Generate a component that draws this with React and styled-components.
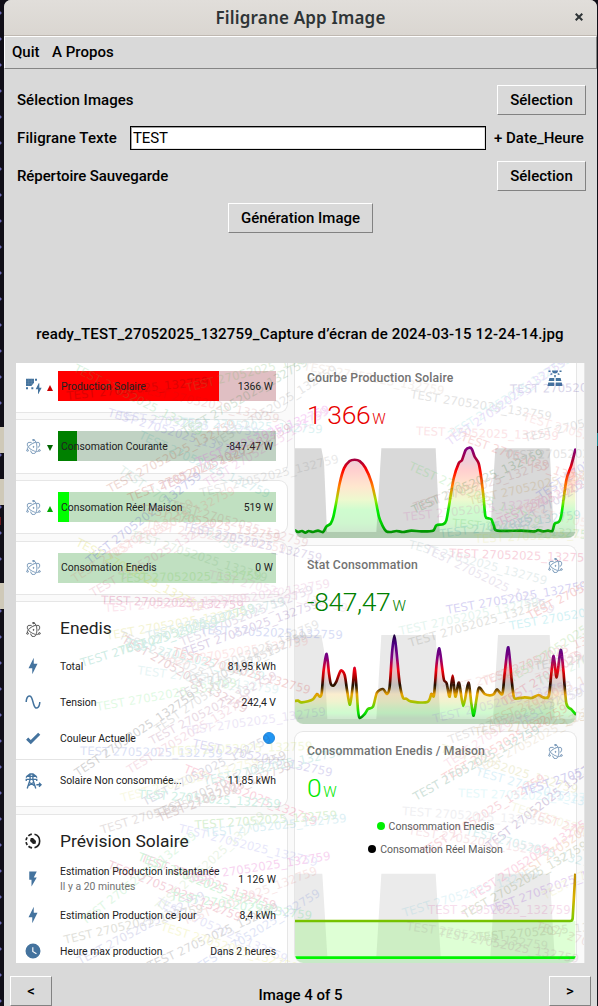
import React from "react";
import styled, { createGlobalStyle } from "styled-components";
import { SiElectron } from "react-icons/si";

const Global = createGlobalStyle`
  * { box-sizing: border-box; }
  html, body { margin: 0; padding: 0; }
  body { width: 598px; height: 1006px; overflow: hidden; background: #100e17; font-family: Roboto, "Liberation Sans", sans-serif; }
`;

const Desktop = styled.div`
  width: 598px;
  height: 1006px;
  padding: 0 1px 0 4px;
  background:
    linear-gradient(#cfc9b8, #cfc9b8) 0 427px / 4px 26px no-repeat,
    linear-gradient(#cfc9b8, #cfc9b8) 0 479px / 4px 26px no-repeat,
    linear-gradient(#cfc9b8, #cfc9b8) 0 583px / 4px 26px no-repeat,
    linear-gradient(#6d1a20, #6d1a20) 0 517px / 1px 8px no-repeat,
    linear-gradient(#127a86, #127a86) 597px 433px / 1px 13px no-repeat,
    radial-gradient(circle at 0 50%, #6a67b0 0 1px, transparent 2px) 0 0 / 4px 26px repeat-y,
    #100e17;
`;

const AppWindow = styled.div`
  display: flex;
  flex-direction: column;
  height: 1006px;
  background: #d9d9d9;
  border-radius: 7px 7px 0 0;
  overflow: hidden;
  color: #000;
  font-size: 15px;
  font-weight: 500;
`;

const TitleBar = styled.header`
  display: grid;
  grid-template-columns: 40px 1fr 40px;
  align-items: center;
  height: 36px;
  flex: none;
  background: linear-gradient(#e1deda, #dad6d1);
  border-bottom: 1px solid #bfb8b1;
  color: #2e3436;
`;

const Title = styled.h1`
  grid-column: 2;
  margin: 0;
  text-align: center;
  font: 600 17px/36px "Noto Sans", sans-serif;
  letter-spacing: 0.18px;
`;

const CloseButton = styled.button`
  border: 0;
  background: none;
  padding: 0 0 2px 3px;
  display: grid;
  place-items: center;
  svg { width: 8px; height: 8px; }
`;

const MenuBar = styled.nav`
  display: flex;
  align-items: center;
  gap: 12.6px;
  height: 33px;
  flex: none;
  padding: 0 7px 2px;
  border: 1px solid;
  border-color: #fff #858585 #858585 #fff;
`;

const Form = styled.section`
  display: flex;
  flex-direction: column;
  flex: none;
  height: 250px;
  padding: 12px 11px 0 13px;
`;

const FormRow = styled.div`
  display: flex;
  align-items: center;
  justify-content: ${(p) => p.$justify || "space-between"};
  height: ${(p) => p.$h || 38}px;
  padding-right: ${(p) => (p.$justify === "center" ? 2 : 0)}px;
`;

const FieldLabel = styled.span`
  letter-spacing: ${(p) => p.$track || 0}px;
`;

const TkButton = styled.button`
  width: ${(p) => p.$w}px;
  height: 30px;
  padding: 0;
  border: 1px solid;
  border-color: #fff #828282 #828282 #fff;
  background: #d9d9d9;
  color: #000;
  font: inherit;
  line-height: 28px;
`;

const Entry = styled.input`
  width: 356px;
  height: 24px;
  margin: 0 8px 0 13px;
  padding: 0 2px;
  border: 1px solid #000;
  border-radius: 0;
  box-shadow: inset 1px 1px #a0a0a0, inset -1px -1px #e4e4e4;
  background: #fff;
  color: #000;
  font: 400 15px/20px Roboto, sans-serif;
  letter-spacing: -0.1px;
  outline: none;
`;

const Suffix = styled.span`
  flex: 1;
  white-space: nowrap;
`;

const FileName = styled.div`
  flex: none;
  height: 44px;
  line-height: 30px;
  padding-right: 1px;
  text-align: center;
  white-space: nowrap;
  letter-spacing: 0.16px;
`;

const Photo = styled.main`
  position: relative;
  flex: none;
  display: grid;
  grid-template-columns: 272px 283px 8px;
  column-gap: 6px;
  width: 569px;
  height: 600px;
  margin-left: 12px;
  overflow: hidden;
  background: #fafafa;
  border-right: 1px solid #e4e4e4;
  color: #212121;
  font-size: 10.4px;
  font-weight: 400;
`;

const Column = styled.div`
  display: flex;
  flex-direction: column;
  gap: ${(p) => p.$gap}px;
`;

const Card = styled.section`
  flex: none;
  height: ${(p) => p.$h}px;
  background: #fff;
  border: 1px solid #e6e6e6;
  border-left-width: ${(p) => (p.$cut ? 0 : 1)}px;
  border-top-width: ${(p) => (p.$first ? 0 : 1)}px;
  border-radius: ${(p) => (p.$cut ? `0 ${p.$first ? 0 : 9}px 9px 0` : p.$first ? "0 0 9px 9px" : "9px")};
  overflow: hidden;
`;

const MeterCard = styled(Card)`
  display: grid;
  grid-template-columns: 15px 11px 218px;
  column-gap: 3px;
  align-items: center;
  padding: 0 0 ${(p) => (p.$first ? 2 : 0)}px 10px;
`;

const Meter = styled.div`
  display: flex;
  align-items: center;
  justify-content: space-between;
  height: 30px;
  padding: 0 3px;
  background: linear-gradient(90deg, ${(p) => p.$fill} ${(p) => p.$pct}%, ${(p) => p.$track} ${(p) => p.$pct}%);
`;

const Trend = styled.span`
  justify-self: center;
  width: 0;
  height: 0;
  margin-top: 3px;
  border: 3px solid transparent;
  ${(p) => p.$dir === "up" && `border-top: 0; border-bottom: 6px solid ${p.$color};`}
  ${(p) => p.$dir === "down" && `border-bottom: 0; border-top: 6px solid ${p.$color};`}
`;

const ListTitle = styled.div`
  display: grid;
  grid-template-columns: 18px 1fr;
  column-gap: 18px;
  align-items: center;
  justify-items: start;
  height: ${(p) => p.$h}px;
  padding: 6px 11px 0 8px;
  font-size: 17.4px;
`;

const ListRow = styled.div`
  display: grid;
  grid-template-columns: 18px 1fr auto;
  column-gap: 18px;
  align-items: center;
  height: 35.8px;
  padding: 0 11px 0 8px;
  color: #44739e;
`;

const RowText = styled.div`
  color: #212121;
  line-height: 15px;
  white-space: nowrap;
  small { display: block; font-size: 10.4px; color: #727272; }
`;

const Rule = styled.hr`
  border: 0;
  border-top: 1px solid #e4e4e4;
  margin: 3px 0;
`;

const BlueDot = styled.span`
  display: block;
  width: 12px;
  height: 12px;
  margin-right: 1px;
  border-radius: 50%;
  background: #2196f3;
  border: 1px solid #2488de;
`;

const Atom = styled(SiElectron)`
  width: 15px;
  height: 15px;
  margin: ${(p) => p.$m || "0"};
  color: ${(p) => p.$tone || "#5f86ab"};
  stroke: currentColor;
  stroke-width: 0.45;
`;

const GraphCard = styled(Card)`
  display: flex;
  flex-direction: column;
  border-bottom: 0;
`;

const GraphHead = styled.div`
  display: flex;
  justify-content: space-between;
  padding: ${(p) => p.$top}px 12px 0 12px;
  color: #727272;
  font-size: 12.2px;
  font-weight: 500;
  line-height: 18px;
  letter-spacing: 0.14px;
`;

const BigValue = styled.div`
  padding: 10px 0 0 12px;
  color: ${(p) => p.$color};
  font-size: 26.5px;
  font-weight: 300;
  line-height: 36px;
  letter-spacing: -0.4px;
  white-space: pre;
  span { font-size: 15px; margin-left: 2px; }
`;

const GraphSvg = styled.svg`
  display: block;
  width: 281px;
  height: ${(p) => p.$h}px;
  margin-top: auto;
  flex: none;
`;

const Legend = styled.div`
  display: flex;
  flex-direction: column;
  align-items: center;
  padding-top: 5px;
  color: #5c5c5c;
  font-size: 10.5px;
  line-height: 23.2px;
`;

const LegendItem = styled.div`
  display: flex;
  align-items: center;
  gap: 4px;
  &::before {
    content: "";
    width: 8px;
    height: 8px;
    border-radius: 50%;
    background: ${(p) => p.$color};
  }
`;

const Stamps = styled.svg`
  position: absolute;
  inset: 0;
  width: 569px;
  height: 600px;
  pointer-events: none;
  font: 11.7px "DejaVu Sans", sans-serif;
  opacity: 0.22;
`;

const Footer = styled.footer`
  display: flex;
  justify-content: space-between;
  flex: none;
  padding: 13px 6px 0 6px;
  span { padding-top: 9px; line-height: 20px; }
`;

const PATHS = {
  bolt: "M11 15H6L13 1V9H18L11 23V15Z",
  flash: "M7,2V13H10V22L17,10H13L17,2H7Z",
  sine: "M16.5,21C13.5,21 12.31,16.76 11.05,12.28C10.14,9.04 9,5 7.5,5C4.11,5 4,11.93 4,12H2C2,11.63 2.06,3 7.5,3C10.5,3 11.71,7.25 12.97,11.74C13.83,14.8 15,19 16.5,19C19.94,19 20.03,12.07 20.03,12H22.03C22.03,12.37 21.97,21 16.5,21Z",
  check: "M9,20.42L2.79,14.21L5.62,11.38L9,14.77L18.88,4.88L21.71,7.71L9,20.42Z",
  clock: "M12,2A10,10 0 0,0 2,12A10,10 0 0,0 12,22A10,10 0 0,0 22,12A10,10 0 0,0 12,2M16.2,16.2L11,13V7H12.5V12.2L17,14.9L16.2,16.2Z",
};

const Mdi = ({ name }) => (
  <svg width="18" height="18" viewBox="0 0 24 24" fill="currentColor"><path d={PATHS[name]} /></svg>
);

const Tower = () => (
  <svg width="18" height="18" viewBox="0 0 24 24" fill="none" stroke="currentColor" strokeWidth="1.8">
    <path d="M2.8 7.5L4 5.5L8 2.6H12L16 5.5L17.2 7.5M3.5 5.9H16.5M3 12V9.8H17V12M8 3L8.2 10L4.3 22M12 3L11.8 10L15.7 22M7.5 14L13.5 18M12.5 14L6.5 18" />
    <path d="M16.5 17H22.5M20 14.2L22.8 17L20 19.8" />
  </svg>
);

const PanelBolt = () => (
  <svg width="16" height="16" viewBox="0 0 24 24" fill="#44739e">
    <path d="M0 1H12V7L8 12H0ZM13.5 1H16.5V4H13.5ZM0 14H3V17H0ZM8 14H11V17H8Z" />
    <path d="M4 1V12M8 1V12M0 4.7H12M0 8.4H11" stroke="#7795b0" strokeWidth=".5" />
    <path d="M19 8L14.5 17H18V25L23.5 14.5H20V8Z" />
  </svg>
);

const SolarPower = () => (
  <svg width="18" height="18" viewBox="0 0 24 24" fill="#44739e">
    <path d="M3.3 2H6V4H3.3ZM18 2H20.7V4H18ZM8 2H16A4 4 0 0 1 8 2ZM11 8H13V11H11ZM5.7 6.5L8 5.3L8.8 6.9L6.5 8.1ZM18.3 6.5L16 5.3L15.2 6.9L17.5 8.1ZM4.5 12H11V16H3.5ZM13 12H19.5L20.5 16H13ZM3 18H11V22.5H2ZM13 18H21L22 22.5H13Z" />
  </svg>
);

const Radar = () => (
  <svg width="18" height="18" viewBox="0 0 24 24" fill="none" stroke="#212121" strokeWidth="2.2">
    <path d="M14 3.1A9.2 9.2 0 0 1 14 20.9M10.4 2.9A9.2 9.2 0 0 0 5.8 5.2M4.2 7.2A9.2 9.2 0 0 0 2.8 11M2.8 13.4A9.2 9.2 0 0 0 4.4 17.2M6 19A9.2 9.2 0 0 0 10.8 21.1" />
    <path d="M9 8L12 8L16 12L15.5 15.5L12 16L8 12Z" fill="#212121" stroke="none" />
  </svg>
);

// Catmull-Rom spline through the sampled points.
const spline = (pts) =>
  pts.reduce((d, p, i) => {
    if (i === 0) return `M${p[0]} ${p[1]}`;
    const a = pts[i - 2] || pts[i - 1];
    const b = pts[i - 1];
    const c = pts[i + 1] || p;
    const k = 7;
    return `${d}C${b[0] + (p[0] - a[0]) / k} ${b[1] + (p[1] - a[1]) / k} ${p[0] - (c[0] - b[0]) / k} ${p[1] - (c[1] - b[1]) / k} ${p[0]} ${p[1]}`;
  }, "");

const SOLAR = [[21,525],[30,530],[42,527],[52,532],[62,527],[75,530],[90,526],[105,530],[115,514],[128,505],[136,485],[145,440],[155,385],[168,340],[185,318],[200,314],[215,318],[232,338],[250,380],[262,430],[273,485],[283,510],[295,528],[310,530],[325,527],[345,530],[370,526],[400,528],[435,526],[445,510],[465,507],[475,495],[485,440],[497,370],[512,325],[522,315],[533,285],[545,278],[552,283],[560,305],[572,325],[580,370],[587,430],[592,482],[600,489],[610,492],[618,512],[628,526],[700,526],[740,528],[750,524],[765,528],[780,526],[793,527],[800,505],[812,500],[820,480],[835,375],[850,330],[862,284]];
const USAGE = [[21,483],[30,482],[40,487],[60,484],[75,478],[87,462],[95,470],[101,460],[107,390],[116,342],[123,400],[128,430],[136,437],[145,425],[158,392],[170,405],[177,450],[186,494],[194,440],[200,384],[206,450],[210,510],[215,534],[230,522],[240,507],[255,500],[267,458],[285,447],[297,462],[305,440],[312,340],[319,287],[326,340],[335,430],[345,473],[355,476],[368,484],[418,486],[430,462],[438,465],[446,370],[454,325],[462,380],[468,420],[476,430],[485,470],[494,407],[502,470],[513,428],[526,498],[541,428],[550,490],[557,527],[565,480],[573,443],[590,462],[605,466],[617,463],[627,448],[643,462],[650,400],[661,322],[671,420],[678,472],[690,475],[710,472],[730,474],[752,465],[765,472],[782,468],[790,400],[797,348],[806,412],[818,330],[826,390],[835,490],[850,508],[862,522]];

const SOLAR_STOPS = [[0, "#800080"], [0.17, "#b00030"], [0.26, "#ff0000"], [0.46, "#ff8000"], [0.62, "#a0e000"], [0.74, "#00f000"], [0.9, "#00d000"], [1, "#009000"]];
const USAGE_STOPS = [[0, "#200040"], [0.1, "#4b0082"], [0.27, "#800080"], [0.42, "#f00010"], [0.5, "#b00000"], [0.6, "#201000"], [0.64, "#503000"], [0.71, "#e8a000"], [0.8, "#b0c000"], [0.88, "#40d800"], [0.94, "#00e800"], [1, "#008a00"]];

const Graph = ({ id, h, top, bottom, points, stops, y1, y2, nights, nightColor, base }) => {
  const line = spline(points);
  return (
    <GraphSvg $h={h} viewBox={`21 ${top} 843 ${bottom - top}`} preserveAspectRatio="none">
      <defs>
        <linearGradient id={id} gradientUnits="userSpaceOnUse" x1="0" x2="0" y1={y1} y2={y2}>
          {stops.map(([o, c]) => <stop key={o} offset={o} stopColor={c} />)}
        </linearGradient>
      </defs>
      {nights.map((n) => <polygon key={n} points={n} fill={nightColor} />)}
      <rect x="21" y={base} width="843" height="30" fill={nightColor} />
      <path d={`${line}L862 ${bottom}L21 ${bottom}Z`} fill={`url(#${id})`} opacity="0.19" />
      <path d={line} fill="none" stroke={`url(#${id})`} strokeWidth="8" strokeLinecap="round" strokeLinejoin="round" />
    </GraphSvg>
  );
};

const STAMPS = [
  [117,419,7,"#3b3bd0"],[107,416,17,"#4a3bd0"],[73,371,27,"#3dc060"],[67,400,-6,"#601010"],[217,447,-32,"#404040"],
  [207,487,-31,"#d03bb0"],[110,493,-28,"#b04020"],[163,491,-25,"#a02060"],[118,472,35,"#209060"],[180,426,3,"#20b0b0"],
  [185,436,-30,"#308040"],[130,502,-22,"#c0392b"],[139,393,12,"#b02020"],[138,438,25,"#20a0a0"],[187,392,-14,"#60b050"],
  [90,565,-38,"#4040c0"],[75,583,-33,"#e04040"],[93,597,-30,"#d04070"],[140,512,12,"#d04040"],[75,545,28,"#d0d020"],
  [130,538,18,"#409040"],[110,560,-28,"#f06060"],[119,582,-1,"#60c030"],[101,604,2,"#c01060"],[170,508,16,"#b02030"],
  [145,528,10,"#e07070"],[182,530,13,"#6040a0"],[107,640,-10,"#d0d040"],[118,638,25,"#444444"],[182,646,-22,"#603080"],
  [200,634,2,"#3050d0"],[120,655,-18,"#30b060"],[168,667,-9,"#f04040"],[105,612,-4,"#f06090"],[121,642,30,"#a02030"],
  [82,667,-17,"#30b090"],[137,674,8,"#40b0b0"],[97,711,-10,"#40e050"],[125,646,14,"#30c0b0"],[172,655,16,"#d04040"],
  [158,733,-35,"#333333"],[152,745,-28,"#802060"],[80,755,1,"#4060d0"],[78,777,-34,"#444444"],[130,774,-31,"#c01050"],
  [170,755,-2,"#b0d020"],[192,747,12,"#5040c0"],[183,772,22,"#f04070"],[122,802,-15,"#d0d020"],
  [145,806,-27,"#333366"],[158,818,-25,"#554444"],[138,798,4,"#30c090"],[185,735,-8,"#7040c0"],
  [102,834,-17,"#664444"],[160,822,-22,"#803030"],[195,829,-4,"#60c040"],[178,832,14,"#4040e0"],[205,837,-6,"#20a0c0"],
  [140,861,20,"#d02050"],[137,860,22,"#30d060"],[155,905,24,"#4040d0"],[85,925,-38,"#40d060"],[65,944,-13,"#666644"],
  [107,868,22,"#d03060"],[160,912,-42,"#60b040"],[80,965,-28,"#4444aa"],[150,970,-25,"#444444"],[170,900,8,"#3bd070"],
  [185,925,-21,"#d04040"],[200,971,-32,"#4060d0"],[160,930,17,"#e0e040"],[190,882,-9,"#e03bc0"],
  [303,370,10,"#b08060"],[410,398,9,"#555555"],[416,435,2,"#f07080"],[510,393,-1,"#5544a0"],
  [452,439,-33,"#20c0c0"],[450,446,-35,"#8040e0"],[460,440,20,"#e04040"],[198,466,-22,"#e040e0"],
  [525,442,-14,"#333333"],[522,420,17,"#f08080"],[408,469,24,"#50d050"],[414,514,-24,"#307030"],[404,521,-6,"#d020a0"],
  [415,511,-18,"#a04040"],[505,459,-1,"#777777"],[452,527,5,"#60c060"],[520,516,-29,"#e04040"],[515,532,-33,"#303080"],
  [540,500,-33,"#4040d0"],[440,538,-8,"#30a0a0"],[525,514,12,"#f08070"],[201,497,-14,"#777777"],
  [470,505,-13,"#b08030"],[500,526,-25,"#d04090"],[408,548,15,"#408080"],[424,552,26,"#8060a0"],[449,557,2,"#e01050"],
  [447,614,-10,"#5040d0"],[400,635,-12,"#30b080"],[410,647,-16,"#555544"],[510,630,-10,"#10c0d0"],[530,620,-28,"#e04040"],
  [475,543,-3,"#d0d020"],[445,694,-14,"#e08080"],[484,686,-22,"#e04040"],[475,736,-8,"#b08040"],
  [434,723,-14,"#8040e0"],[490,726,-24,"#d06040"],[512,683,-34,"#60c040"],[505,706,-32,"#e04060"],[540,686,-25,"#30c060"],
  [520,726,-28,"#8060e0"],[535,670,-8,"#666666"],[440,752,17,"#c0c060"],[450,744,-20,"#554444"],[448,768,-34,"#f06090"],
  [445,782,-30,"#f03030"],[416,801,-29,"#308060"],[478,774,-28,"#b08030"],[475,775,16,"#30b0e0"],[425,856,-32,"#e03050"],
  [490,850,-38,"#502080"],[458,797,2,"#30d0e0"],[402,815,4,"#a0a0b0"],[408,834,9,"#e08090"],[524,796,-19,"#4030c0"],
  [510,810,18,"#c0c040"],[530,817,20,"#e04040"],[465,834,15,"#40b0b0"],[520,880,-35,"#e08040"],
  [404,917,-17,"#30b0d0"],[428,914,0,"#d03090"],[474,900,-33,"#f03080"],[465,919,-30,"#708040"],[406,930,8,"#806070"],
  [438,936,11,"#a05080"],[477,941,-5,"#808060"],[490,914,-20,"#9040d0"],[545,900,-28,"#d0d040"],[535,929,18,"#b06060"],
  [190,612,-10,"#d070b0"],[185,656,-20,"#7040a0"],[190,685,-24,"#444444"],[180,700,-26,"#333333"],
  [204,785,-12,"#30b0a0"],[147,640,-14,"#70b0b0"],[208,578,14,"#d060a0"],
];

const Watermarks = () => (
  <Stamps viewBox="16 363 569 600">
    {STAMPS.map(([x, y, a, c], i) => (
      <text key={i} transform={`translate(${x} ${y}) rotate(${a})`} fill={c} opacity={0.55 + (i % 4) * 0.15}>TEST 27052025_132759</text>
    ))}
  </Stamps>
);

const METERS = [
  { label: "Production Solaire", value: "1366 W", fill: "#ff0000", track: "#e0bfc3", pct: 74, dir: "up", color: "#c80000", icon: "panel" },
  { label: "Consomation Courante", value: "-847.47 W", fill: "#008000", track: "#c0d2c3", pct: 8.8, dir: "down", color: "#006400" },
  { label: "Consomation Réel Maison", value: "519 W", fill: "#00ff00", track: "#c0e0c1", pct: 5.2, dir: "up", color: "#00a800" },
  { label: "Consomation Enedis", value: "0 W", fill: "#c0e0c1", track: "#c0e0c1", pct: 0 },
];

const Row = ({ icon, label, note, value }) => (
  <ListRow>
    {icon}
    <RowText>{label}{note && <small>{note}</small>}</RowText>
    <RowText>{value}</RowText>
  </ListRow>
);

export default function App() {
  return (
    <>
      <Global />
      <Desktop>
        <AppWindow>
          <TitleBar>
            <Title>Filigrane App Image</Title>
            <CloseButton aria-label="Fermer">
              <svg viewBox="0 0 8 8" stroke="#2e3436" strokeWidth="2"><path d="M.7.7L7.3 7.3M7.3.7L.7 7.3" /></svg>
            </CloseButton>
          </TitleBar>
          <MenuBar><span>Quit</span><span>A Propos</span></MenuBar>
          <Form>
            <FormRow><FieldLabel $track={0.04}>Sélection Images</FieldLabel><TkButton $w={89}>Sélection</TkButton></FormRow>
            <FormRow $justify="flex-start"><FieldLabel $track={0.12}>Filigrane Texte</FieldLabel><Entry defaultValue="TEST" /><Suffix>+ Date_Heure</Suffix></FormRow>
            <FormRow><FieldLabel $track={-0.08}>Répertoire Sauvegarde</FieldLabel><TkButton $w={89}>Sélection</TkButton></FormRow>
            <FormRow $justify="center" $h={46}><TkButton $w={145}>Génération Image</TkButton></FormRow>
          </Form>
          <FileName>ready_TEST_27052025_132759_Capture d’écran de 2024-03-15 12-24-14.jpg</FileName>
          <Photo>
            <Column $gap={6.4}>
              {METERS.map((m, i) => (
                <MeterCard key={m.label} $cut $first={i === 0} $h={i === 0 ? 49.9 : 54.3}>
                  {m.icon ? <PanelBolt /> : <Atom />}
                  <Trend $dir={m.dir} $color={m.color} />
                  <Meter $fill={m.fill} $track={m.track} $pct={m.pct}><span>{m.label}</span><span>{m.value}</span></Meter>
                </MeterCard>
              ))}
              <Card $cut $h={206}>
                <ListTitle $h={46.2}><Atom $tone="#333" $m="2px 0 0 1.5px" /><span>Enedis</span></ListTitle>
                <Row icon={<Mdi name="bolt" />} label="Total" value="81,95 kWh" />
                <Row icon={<Mdi name="sine" />} label="Tension" value="242,4 V" />
                <Row icon={<Mdi name="check" />} label="Couleur Actuelle" value={<BlueDot />} />
                <Rule />
                <Row icon={<Tower />} label="Solaire Non consommée..." value="11,85 kWh" />
              </Card>
              <Card $cut $h={170}>
                <ListTitle $h={46.8}><Radar /><span>Prévision Solaire</span></ListTitle>
                <Row icon={<Mdi name="flash" />} label="Estimation Production instantanée" note="Il y a 20 minutes" value="1 126 W" />
                <Row icon={<Mdi name="bolt" />} label="Estimation Production ce jour" value="8,4 kWh" />
                <Row icon={<Mdi name="clock" />} label="Heure max production" value="Dans 2 heures" />
              </Card>
            </Column>
            <Column $gap={6.5}>
              <GraphCard $first $h={175}>
                <GraphHead $top={6}><span>Courbe Production Solaire</span><SolarPower /></GraphHead>
                <BigValue $color="#e80000">1 366<span>W</span></BigValue>
                <Graph id="solar" h={93} top={270} bottom={548} points={SOLAR} stops={SOLAR_STOPS} y1={278} y2={530}
                  nightColor="#d9d9d9" base={530}
                  nights={["21,280 100,280 108,320 117,530 21,530", "280,280 443,280 455,530 265,530", "622,280 785,280 797,530 607,530"]} />
              </GraphCard>
              <GraphCard $h={179.5}>
                <GraphHead $top={10}><span>Stat Consommation</span><Atom $m="2px 1px 0 0" /></GraphHead>
                <BigValue $color="#008000">-847,47<span>W</span></BigValue>
                <Graph id="usage" h={93} top={273} bottom={552} points={USAGE} stops={USAGE_STOPS} y1={287} y2={534}
                  nightColor="#e9e9e9" base={537}
                  nights={["21,285 100,285 108,330 118,537 21,537", "280,285 443,285 457,537 265,537", "630,285 785,285 800,537 615,537"]} />
              </GraphCard>
              <GraphCard $h={232.5}>
                <GraphHead $top={10}><span>Consommation Enedis / Maison</span><Atom $m="2px 1px 0 0" /></GraphHead>
                <BigValue $color="#00e800">0<span>W</span></BigValue>
                <Legend>
                  <LegendItem $color="#00f000">Consommation Enedis</LegendItem>
                  <LegendItem $color="#000">Consomation Réel Maison</LegendItem>
                </Legend>
                <GraphSvg $h={91} viewBox="21 35 843 273" preserveAspectRatio="none">
                  <defs>
                    <linearGradient id="home" gradientUnits="userSpaceOnUse" x1="0" x2="0" y1="40" y2="186">
                      <stop offset="0" stopColor="#c08a00" /><stop offset="0.5" stopColor="#d8b000" /><stop offset="0.9" stopColor="#88c800" /><stop offset="1" stopColor="#70c000" />
                    </linearGradient>
                  </defs>
                  <path d="M21 40H103L118 288H21ZM280 40H443L458 288H265ZM622 40H785L800 288H607Z" fill="#ebebeb" />
                  <path d="M21 182H862V292H21Z" fill="#50ff20" opacity="0.19" />
                  <path d="M21 292H864V308H21Z" fill="#c6eac6" />
                  <path d="M21 182H846Q853 182 854 174L862 40" fill="none" stroke="url(#home)" strokeWidth="8" />
                  <path d="M21 292H864" stroke="#00f500" strokeWidth="8" />
                </GraphSvg>
              </GraphCard>
            </Column>
            <Watermarks />
          </Photo>
          <Footer>
            <TkButton $w={42}>&lt;</TkButton>
            <span>Image 4 of 5</span>
            <TkButton $w={42}>&gt;</TkButton>
          </Footer>
        </AppWindow>
      </Desktop>
    </>
  );
}
